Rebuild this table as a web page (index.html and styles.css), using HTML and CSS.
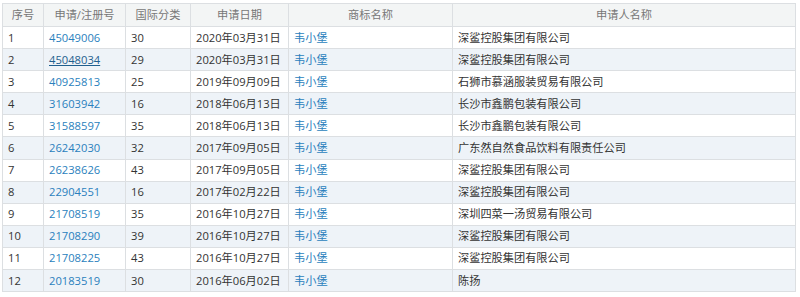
FILE: index.html
```html
<!DOCTYPE html>
<html lang="zh-CN">
<head>
<meta charset="utf-8">
<link rel="stylesheet" href="styles.css">
</head>
<body>
<div class="wrap">
<table class="tm">
  <colgroup>
    <col class="c1"><col class="c2"><col class="c3"><col class="c4"><col class="c5"><col class="c6">
  </colgroup>
  <thead>
    <tr><th>序号</th><th>申请/注册号</th><th>国际分类</th><th>申请日期</th><th>商标名称</th><th>申请人名称</th></tr>
  </thead>
  <tbody>
    <tr><td>1</td><td><a href="#">45049006</a></td><td>30</td><td>2020年03月31日</td><td><a href="#">韦小堡</a></td><td>深鲨控股集团有限公司</td></tr>
    <tr><td>2</td><td><a href="#" class="hover">45048034</a></td><td>29</td><td>2020年03月31日</td><td><a href="#">韦小堡</a></td><td>深鲨控股集团有限公司</td></tr>
    <tr><td>3</td><td><a href="#">40925813</a></td><td>25</td><td>2019年09月09日</td><td><a href="#">韦小堡</a></td><td>石狮市慕涵服装贸易有限公司</td></tr>
    <tr><td>4</td><td><a href="#">31603942</a></td><td>16</td><td>2018年06月13日</td><td><a href="#">韦小堡</a></td><td>长沙市鑫鹏包装有限公司</td></tr>
    <tr><td>5</td><td><a href="#">31588597</a></td><td>35</td><td>2018年06月13日</td><td><a href="#">韦小堡</a></td><td>长沙市鑫鹏包装有限公司</td></tr>
    <tr><td>6</td><td><a href="#">26242030</a></td><td>32</td><td>2017年09月05日</td><td><a href="#">韦小堡</a></td><td>广东然自然食品饮料有限责任公司</td></tr>
    <tr><td>7</td><td><a href="#">26238626</a></td><td>43</td><td>2017年09月05日</td><td><a href="#">韦小堡</a></td><td>深鲨控股集团有限公司</td></tr>
    <tr><td>8</td><td><a href="#">22904551</a></td><td>16</td><td>2017年02月22日</td><td><a href="#">韦小堡</a></td><td>深鲨控股集团有限公司</td></tr>
    <tr><td>9</td><td><a href="#">21708519</a></td><td>35</td><td>2016年10月27日</td><td><a href="#">韦小堡</a></td><td>深圳四菜一汤贸易有限公司</td></tr>
    <tr><td>10</td><td><a href="#">21708290</a></td><td>39</td><td>2016年10月27日</td><td><a href="#">韦小堡</a></td><td>深鲨控股集团有限公司</td></tr>
    <tr><td>11</td><td><a href="#">21708225</a></td><td>43</td><td>2016年10月27日</td><td><a href="#">韦小堡</a></td><td>深鲨控股集团有限公司</td></tr>
    <tr><td>12</td><td><a href="#">20183519</a></td><td>30</td><td>2016年06月02日</td><td><a href="#">韦小堡</a></td><td>陈扬</td></tr>
  </tbody>
</table>
</div>
</body>
</html>
```
FILE: styles.css
```css
html, body {
  margin: 0;
  padding: 0;
  background: #fff;
}
body {
  font-family: "Open Sans", "Noto Sans CJK SC", sans-serif;
  font-size: 11.2px;
  color: #333;
}
.wrap {
  padding: 3px 4px 0 2px;
}
.tm {
  width: 794px;
  border-collapse: collapse;
  table-layout: fixed;
  border: 1px solid #dcdfe2;
}
.c1 { width: 41px; }
.c2 { width: 82px; }
.c3 { width: 65px; }
.c4 { width: 98px; }
.c5 { width: 164px; }
.c6 { width: auto; }
.tm th, .tm td {
  height: 21.1px;
  padding: 0 5px;
  border: 1px solid #dcdfe2;
  line-height: 18px;
  text-align: left;
  white-space: nowrap;
  overflow: hidden;
}
.tm th {
  height: 22px;
  background: #f3f5f5;
  color: #777;
  font-weight: normal;
  text-align: center;
}
.tm tbody tr:nth-child(even) td {
  background: #eef3f8;
}
.tm a {
  color: #2a7fbd;
  text-decoration: none;
}
.tm a.hover {
  color: #1f5f8f;
  text-decoration: underline;
}
```
